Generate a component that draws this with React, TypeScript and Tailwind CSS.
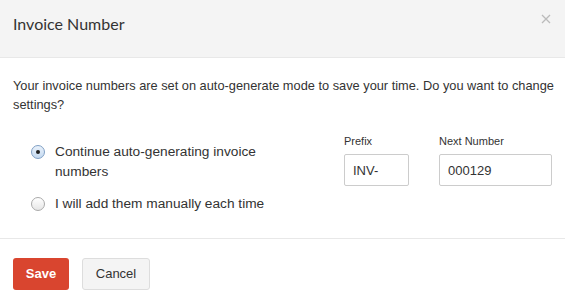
import { useState } from "react";

export default function App() {
  const [mode, setMode] = useState<"auto" | "manual">("auto");
  const [prefix, setPrefix] = useState("INV-");
  const [nextNumber, setNextNumber] = useState("000129");

  return (
    <div className="h-[300px] w-[565px] overflow-hidden bg-white font-['Liberation_Sans',Arial,sans-serif] text-[#333]">
      {/* header */}
      <div className="flex h-[58px] items-start justify-between border-b border-[#e8e8e8] bg-[#f4f4f4] pl-[13px] pr-[14px]">
        <h1 className="mt-[14px] font-['Lato',sans-serif] text-[16px] leading-[20px] text-[#333]">
          Invoice Number
        </h1>
        <button className="mt-[14px] text-[#bbb]" aria-label="Close">
          <svg width="10" height="10" viewBox="0 0 10 10">
            <path d="M1 1 L9 9 M9 1 L1 9" stroke="currentColor" strokeWidth="1.3" />
          </svg>
        </button>
      </div>

      {/* body */}
      <div className="border-b border-[#e8e8e8] px-[13px] pb-[24px] pt-[18px]">
        <p className="w-[548px] text-[12.8px] leading-[19px]">
          Your invoice numbers are set on auto-generate mode to save your time. Do you want to change
          settings?
        </p>

        <div className="mt-[20px] flex">
          <div className="w-[332px] pl-[18px] pt-[8px]">
            <label className="flex items-start gap-[10px] text-[13.7px] leading-[20px]">
              <Radio checked={mode === "auto"} onChange={() => setMode("auto")} />
              <span className="w-[220px]">Continue auto-generating invoice numbers</span>
            </label>
            <label className="mt-[12px] flex items-start gap-[10px] text-[13.7px] leading-[20px]">
              <Radio checked={mode === "manual"} onChange={() => setMode("manual")} />
              <span>I will add them manually each time</span>
            </label>
          </div>

          <div className="flex gap-[30px]">
            <div>
              <div className="text-[11px] leading-[14px]">Prefix</div>
              <input
                value={prefix}
                onChange={(e) => setPrefix(e.target.value)}
                className="mt-[6px] h-[32px] w-[65px] rounded-[2px] border border-[#ccc] px-[8px] text-[13px] outline-none"
              />
            </div>
            <div>
              <div className="text-[11px] leading-[14px]">Next Number</div>
              <input
                value={nextNumber}
                onChange={(e) => setNextNumber(e.target.value)}
                className="mt-[6px] h-[32px] w-[113px] rounded-[2px] border border-[#ccc] px-[8px] text-[13px] outline-none"
              />
            </div>
          </div>
        </div>
      </div>

      {/* footer */}
      <div className="flex gap-[13px] px-[13px] pt-[19px]">
        <button className="h-[32px] w-[56px] rounded-[3px] bg-[#d9452f] text-[13px] font-bold text-white">
          Save
        </button>
        <button className="h-[32px] w-[68px] rounded-[3px] border border-[#ddd] bg-[#f4f4f4] text-[13px] text-[#333]">
          Cancel
        </button>
      </div>
    </div>
  );
}

function Radio({ checked, onChange }: { checked: boolean; onChange: () => void }) {
  return (
    <span
      onClick={onChange}
      className={`mt-[3px] flex h-[14px] w-[14px] shrink-0 items-center justify-center rounded-full border ${
        checked
          ? "border-[#7f9fc4] bg-gradient-to-b from-[#eaf2fb] to-[#c4d9f0]"
          : "border-[#aaa] bg-gradient-to-b from-white to-[#e6e6e6]"
      }`}
    >
      {checked ? <span className="h-[4px] w-[4px] rounded-full bg-[#222]" /> : null}
    </span>
  );
}
